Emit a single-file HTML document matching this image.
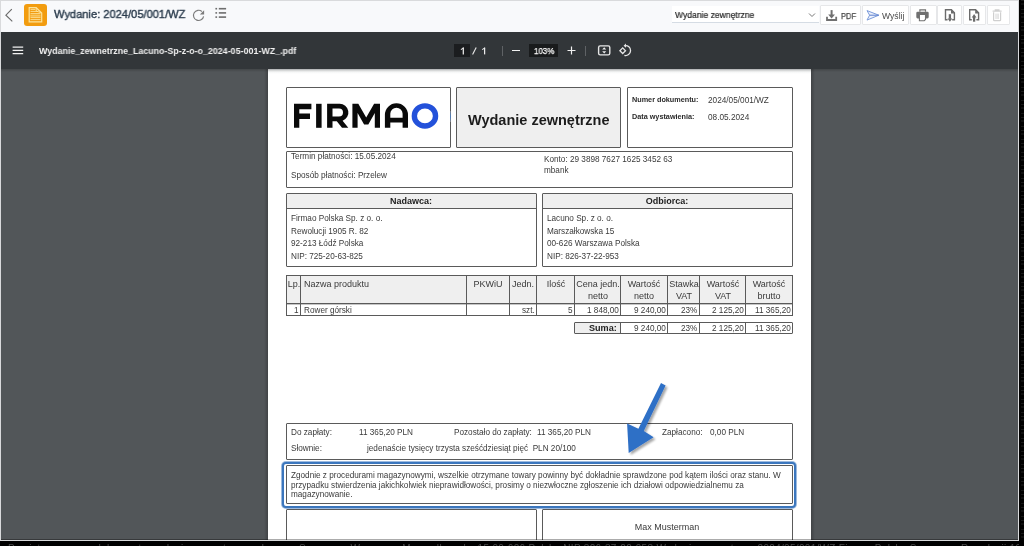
<!DOCTYPE html>
<html><head><meta charset="utf-8">
<style>
*{margin:0;padding:0;box-sizing:border-box}
html,body{width:1024px;height:546px;overflow:hidden;background:#000;font-family:"Liberation Sans",sans-serif;position:relative}
.a{position:absolute}
.t{position:absolute;white-space:nowrap;line-height:1;will-change:transform}
.d{}
</style></head><body>
<div class="a" style="left:0px;top:0px;width:1019px;height:541px;background:#d9dadc"></div>
<div class="a" style="left:1px;top:1px;width:1017px;height:539px;background:#f8f9fb"></div>
<div class="a" style="left:1px;top:32px;width:1017px;height:37px;background:#323639"></div>
<div class="a" style="left:1px;top:69px;width:1017px;height:471px;background:#525659"></div>
<div class="a" style="left:264px;top:69px;width:4px;height:471px;background:linear-gradient(90deg,rgba(0,0,0,0),rgba(0,0,0,.22))"></div>
<div class="a" style="left:811px;top:69px;width:4px;height:471px;background:linear-gradient(90deg,rgba(0,0,0,.22),rgba(0,0,0,0))"></div>
<div class="a" style="left:268px;top:69px;width:543px;height:471px;background:#fff"></div>
<div class="a" style="left:268px;top:69px;width:543px;height:5px;background:linear-gradient(#d5d7d9,#eef0f0 30%,#fff)"></div>
<div class="a" style="left:1px;top:69px;width:1017px;height:3px;background:linear-gradient(rgba(0,0,0,.2),rgba(0,0,0,0))"></div>
<svg class="a" style="left:0;top:0" width="1024" height="546" viewBox="0 0 1024 546"><path d="M11.8 9.1 L5.9 15.2 L12.3 21.4" fill="none" stroke="#6a6a6a" stroke-width="1.15"/></svg>
<div class="a" style="left:24px;top:4px;width:23px;height:22px;background:#f29c0f;border-radius:3px"></div>
<svg class="a" style="left:0;top:0" width="1024" height="546" viewBox="0 0 1024 546"><path d="M29.2 7.7 H36.2 L41.7 13 V21.9 H29.2 Z" fill="none" stroke="#fde39a" stroke-width="1.2"/><path d="M36.2 7.7 V11 L41.7 13" fill="none" stroke="#fde39a" stroke-width="0.9"/><path d="M30.5 9.4 H35.3 M30.5 11.4 H38.2 M30.5 13.6 H40.5 M30.5 17.6 H40.5 M30.5 19.6 H40.5" stroke="#fde39a" stroke-width="0.9"/><rect x="30.3" y="14.6" width="10.3" height="2.2" fill="#f8c35a"/></svg>
<div class="t" style="left:54.30px;top:9.25px;font-size:11.4px;color:#2a3b4c;transform:scaleX(0.975);transform-origin:0 0;-webkit-text-stroke:0.4px #2a3b4c;">Wydanie: 2024/05/001/WZ</div>
<svg class="a" style="left:0;top:0" width="1024" height="546" viewBox="0 0 1024 546"><path d="M203.6 16.3 A5.1 5.1 0 1 1 201.9 11.5" fill="none" stroke="#7b7b7b" stroke-width="1.15"/><path d="M204.1 10.2 V14.6 H199.9 Z" fill="#7b7b7b"/></svg>
<svg class="a" style="left:0;top:0" width="1024" height="546" viewBox="0 0 1024 546"><g fill="#6e6e6e"><rect x="215.4" y="7.9" width="1.7" height="1.6"/><rect x="215.4" y="12.1" width="1.7" height="1.6"/><rect x="215.4" y="16.3" width="1.7" height="1.6"/><rect x="218.8" y="7.9" width="7.3" height="1.6"/><rect x="218.8" y="12.1" width="7.3" height="1.6"/><rect x="218.8" y="16.3" width="7.3" height="1.6"/></g></svg>
<div class="a" style="left:672px;top:6px;width:147px;height:17px;background:#fff;border-bottom:1px solid #d5dce4"></div>
<div class="t" style="left:674.60px;top:11.13px;font-size:9.3px;color:#262626;transform:scaleX(0.92);transform-origin:0 0;-webkit-text-stroke:0.2px #262626;">Wydanie zewnętrzne</div>
<svg class="a" style="left:808px;top:12px" width="8" height="6" viewBox="0 0 8 6"><path d="M1 1.5 L4 4.5 L7 1.5" fill="none" stroke="#777" stroke-width="1"/></svg>
<div class="a" style="left:820px;top:5px;width:41px;height:20px;background:#fff;border:1px solid #e6e7e9;border-radius:1px"></div>
<div class="a" style="left:862px;top:5px;width:47px;height:20px;background:#fff;border:1px solid #e6e7e9;border-radius:1px"></div>
<div class="a" style="left:910px;top:5px;width:27px;height:20px;background:#fff;border:1px solid #e6e7e9;border-radius:1px"></div>
<div class="a" style="left:937px;top:5px;width:25px;height:20px;background:#fff;border:1px solid #e6e7e9;border-radius:1px"></div>
<div class="a" style="left:963px;top:5px;width:23px;height:20px;background:#fff;border:1px solid #e6e7e9;border-radius:1px"></div>
<div class="a" style="left:987px;top:5px;width:23px;height:20px;background:#fff;border:1px solid #e6e7e9;border-radius:1px"></div>
<svg class="a" style="left:0;top:0" width="1024" height="546" viewBox="0 0 1024 546"><path d="M831.6 10.1 V16" stroke="#707070" stroke-width="2"/><path d="M828.2 14.6 H835 L831.6 18.6 Z" fill="#707070"/><path d="M827 16.8 V20 H836.2 V16.8" fill="none" stroke="#707070" stroke-width="1.8"/></svg>
<div class="t" style="left:840.80px;top:11.95px;font-size:8.8px;color:#4a4a4a;transform:scaleX(0.86);transform-origin:0 0;-webkit-text-stroke:0.25px #4a4a4a;">PDF</div>
<svg class="a" style="left:0;top:0" width="1024" height="546" viewBox="0 0 1024 546"><path d="M867 10.6 L878.8 15.2 L867 20.1 L869.6 15.2 Z" fill="#eef2fb" stroke="#7b9bdb" stroke-width="1" stroke-linejoin="round"/><path d="M869.6 15.2 H878.8" stroke="#5b7fcf" stroke-width="1"/></svg>
<div class="t" style="left:882.00px;top:12.12px;font-size:8.6px;color:#4a4a4a;">Wyślij</div>
<svg class="a" style="left:0;top:0" width="1024" height="546" viewBox="0 0 1024 546"><path d="M919.9 11.8 V9.8 H925.5 V11.8" fill="none" stroke="#707070" stroke-width="1.2"/><rect x="916.3" y="11.8" width="12.4" height="6.6" rx="1.3" fill="#707070"/><path d="M919.4 14.4 H925.5 V19.5 L924.2 20.7 H919.4 Z" fill="#fff" stroke="#707070" stroke-width="1.1"/></svg>
<svg class="a" style="left:0;top:0" width="1024" height="546" viewBox="0 0 1024 546"><path d="M947.6 19.7 H945.5 V9.8 H951.4 L954.4 12.8 V19.7 H952.2" fill="none" stroke="#6b6b6b" stroke-width="1.4"/><path d="M951 9.6 L954.8 13.4 H951 Z" fill="#6b6b6b"/><path d="M949.9 14.2 V18.8" stroke="#6b6b6b" stroke-width="2.3"/><path d="M947.5 18.5 H952.3 L949.9 21.7 Z" fill="#6b6b6b"/></svg>
<svg class="a" style="left:0;top:0" width="1024" height="546" viewBox="0 0 1024 546"><path d="M971.8 19.7 H969.7 V9.8 H975.6 L978.6 12.8 V19.7 H976.4" fill="none" stroke="#6b6b6b" stroke-width="1.4"/><path d="M975.2 9.6 L979 13.4 H975.2 Z" fill="#6b6b6b"/><path d="M974.1 21.7 V17" stroke="#6b6b6b" stroke-width="2.3"/><path d="M971.7 17.4 H976.5 L974.1 14.1 Z" fill="#6b6b6b"/></svg>
<svg class="a" style="left:0;top:0" width="1024" height="546" viewBox="0 0 1024 546"><path d="M992.6 11.2 H1001.6 M995.3 11 V9.9 H998.9 V11" fill="none" stroke="#cfcfcf" stroke-width="1.2"/><path d="M993.6 12.3 V19.9 Q993.6 20.7 994.4 20.7 H999.8 Q1000.6 20.7 1000.6 19.9 V12.3" fill="none" stroke="#cfcfcf" stroke-width="1.2"/><path d="M995.9 13.6 V19 M997.1 13.6 V19 M998.3 13.6 V19" stroke="#dadada" stroke-width="0.9"/></svg>
<svg class="a" style="left:12px;top:46px" width="12" height="9" viewBox="0 0 12 9"><path d="M0.6 1 H11.2 M0.6 4.3 H11.2 M0.6 7.6 H11.2" stroke="#f1f1f1" stroke-width="1.25"/></svg>
<div class="t" style="left:39.00px;top:47.38px;font-size:9px;font-weight:700;color:#f1f1f1;transform:scaleX(0.986);transform-origin:0 0;">Wydanie_zewnetrzne_Lacuno-Sp-z-o-o_2024-05-001-WZ_.pdf</div>
<div class="a" style="left:454px;top:44px;width:16px;height:13px;background:#1b1d1f"></div>
<svg class="a" style="left:0;top:0" width="1024" height="546" viewBox="0 0 1024 546"><g stroke="#ececec" fill="none"><path d="M463.3 47.6 V54.4" stroke-width="1.25"/><path d="M463.6 47.9 L460.9 49.6" stroke-width="1.1"/><path d="M472.6 54.4 L476.2 47.6" stroke-width="1.1"/><path d="M484.6 47.6 V54.4" stroke-width="1.25"/><path d="M484.9 47.9 L482.2 49.6" stroke-width="1.1"/></g></svg>
<div class="a" style="left:502px;top:46px;width:1px;height:10px;background:#5f6265"></div>
<div class="a" style="left:512px;top:50px;width:8px;height:1.2000000000000028px;background:#f1f1f1"></div>
<div class="a" style="left:529px;top:44px;width:29px;height:13px;background:#191b1c"></div>
<div class="t" style="left:533.60px;top:46.75px;font-size:8.8px;color:#ffffff;transform:scaleX(0.9);transform-origin:0 0;-webkit-text-stroke:0.25px #fff;">103%</div>
<svg class="a" style="left:567px;top:46px" width="9" height="9" viewBox="0 0 9 9"><path d="M4.5 0.5 V8.5 M0.5 4.5 H8.5" stroke="#f1f1f1" stroke-width="1.2"/></svg>
<div class="a" style="left:585px;top:46px;width:1px;height:10px;background:#5f6265"></div>
<svg class="a" style="left:0;top:0" width="1024" height="546" viewBox="0 0 1024 546"><rect x="598.6" y="45.9" width="11.2" height="9" rx="1.6" fill="none" stroke="#e6e6e6" stroke-width="1.4"/><path d="M604.2 47.2 L606.2 49.6 H602.2 Z M604.2 53.6 L606.2 51.2 H602.2 Z" fill="#f0f0f0"/></svg>
<svg class="a" style="left:0;top:0" width="1024" height="546" viewBox="0 0 1024 546"><path d="M624.8 45.6 A5 5 0 1 1 624.4 55.4" fill="none" stroke="#e6e6e6" stroke-width="1.3"/><path d="M626 43.6 V47.8 L623.6 45.7 Z" fill="#e6e6e6"/><path d="M622.7 47.9 L625.5 50.7 L622.7 53.5 L619.9 50.7 Z" fill="none" stroke="#e6e6e6" stroke-width="1.3"/></svg>
<div class="a" style="left:286px;top:87px;width:165px;height:61px;border:1px solid #5a5a5a;background:transparent;border-radius:1px;"></div>
<div class="a" style="left:456px;top:87px;width:165px;height:61px;border:1px solid #5a5a5a;background:#efefef;border-radius:1px;"></div>
<div class="a" style="left:627px;top:87px;width:166px;height:61px;border:1px solid #5a5a5a;background:transparent;border-radius:1px;"></div>
<svg class="a" style="left:0;top:0" width="1024" height="546" viewBox="0 0 1024 546"><g fill="#0a0a0a"><path d="M294 103.8 H311.4 V109.2 H299.3 V113.6 H310 V118.9 H299.3 V127.8 H294 Z"/><rect x="316.1" y="103.8" width="5.5" height="24"/><path fill-rule="evenodd" d="M327.1 103.8 H339.5 A8.7 8.7 0 0 1 342.6 120.7 L348.3 127.8 H342 L336.8 121.2 H332.5 V127.8 H327.1 Z M332.5 108.6 V116.6 H339 A4 4 0 0 0 339 108.6 Z"/><path d="M352.4 127.8 V103.8 H358.3 L366.2 117.6 L374.1 103.8 H380 V127.8 H374.8 V113 L368.3 124.6 H364.1 L357.6 113 V127.8 Z"/><path fill-rule="evenodd" d="M384.9 127.8 V114.9 A11.55 11.55 0 0 1 408 114.9 V127.8 H402.6 V122.4 H390.3 V127.8 Z M390.3 117.8 H402.6 V113.8 A6.15 6.15 0 0 0 390.3 113.8 Z"/></g><ellipse cx="424.95" cy="115.9" rx="10.6" ry="10.05" fill="none" stroke="#2351da" stroke-width="5.4"/></svg>
<div class="a" style="left:450px;top:111px;width:1px;height:11px;background:linear-gradient(#7a7f88,#4f7bb3 45%,#4f7bb3 60%,#8a8585)"></div>
<div class="t" style="left:468.20px;top:113.03px;font-size:14.5px;font-weight:700;color:#1c1c1c;">Wydanie zewnętrzne</div>
<div class="t" style="left:632.00px;top:95.86px;font-size:7.25px;font-weight:700;color:#2a2a2a;">Numer dokumentu:</div>
<div class="t d" style="left:708.30px;top:97.02px;font-size:8.24px;color:#3a3a3a;">2024/05/001/WZ</div>
<div class="t" style="left:632.00px;top:112.66px;font-size:7.25px;font-weight:700;color:#2a2a2a;">Data wystawienia:</div>
<div class="t d" style="left:708.30px;top:113.62px;font-size:8.24px;color:#3a3a3a;">08.05.2024</div>
<div class="a" style="left:286px;top:151px;width:507px;height:37px;border:1px solid #5a5a5a;background:transparent;border-radius:1px;"></div>
<div class="t d" style="left:291.00px;top:153.26px;font-size:8.2px;color:#3a3a3a;">Termin płatności: 15.05.2024</div>
<div class="t d" style="left:291.00px;top:171.96px;font-size:8.2px;color:#3a3a3a;">Sposób płatności: Przelew</div>
<div class="t d" style="left:544.20px;top:156.06px;font-size:8.2px;color:#3a3a3a;">Konto: 29 3898 7627 1625 3452 63</div>
<div class="t d" style="left:544.20px;top:167.26px;font-size:8.2px;color:#3a3a3a;">mbank</div>
<div class="a" style="left:286px;top:193px;width:251px;height:74px;border:1px solid #5a5a5a;background:transparent;border-radius:1px;"></div>
<div class="a" style="left:287px;top:194px;width:249px;height:15px;background:#efefef;border-bottom:1px solid #5a5a5a"></div>
<div class="t" style="left:211.10px;width:400px;text-align:center;top:196.98px;font-size:9px;font-weight:700;color:#222;">Nadawca:</div>
<div class="t d" style="left:291.00px;top:214.86px;font-size:8.2px;color:#3a3a3a;">Firmao Polska Sp. z o. o.</div>
<div class="t d" style="left:291.00px;top:227.61px;font-size:8.2px;color:#3a3a3a;">Rewolucji 1905 R. 82</div>
<div class="t d" style="left:291.00px;top:240.36px;font-size:8.2px;color:#3a3a3a;">92-213 Łódź Polska</div>
<div class="t d" style="left:291.00px;top:253.11px;font-size:8.2px;color:#3a3a3a;">NIP: 725-20-63-825</div>
<div class="a" style="left:542px;top:193px;width:251px;height:74px;border:1px solid #5a5a5a;background:transparent;border-radius:1px;"></div>
<div class="a" style="left:543px;top:194px;width:249px;height:15px;background:#efefef;border-bottom:1px solid #5a5a5a"></div>
<div class="t" style="left:467.10px;width:400px;text-align:center;top:196.98px;font-size:9px;font-weight:700;color:#222;">Odbiorca:</div>
<div class="t d" style="left:547.00px;top:214.86px;font-size:8.2px;color:#3a3a3a;">Lacuno Sp. z o. o.</div>
<div class="t d" style="left:547.00px;top:227.61px;font-size:8.2px;color:#3a3a3a;">Marszałkowska 15</div>
<div class="t d" style="left:547.00px;top:240.36px;font-size:8.2px;color:#3a3a3a;">00-626 Warszawa Polska</div>
<div class="t d" style="left:547.00px;top:253.11px;font-size:8.2px;color:#3a3a3a;">NIP: 826-37-22-953</div>
<div class="a" style="left:286px;top:275px;width:507px;height:29px;background:#efefef"></div>
<div class="a" style="left:286px;top:275px;width:507px;height:1px;background:#5a5a5a"></div>
<div class="a" style="left:286px;top:303px;width:507px;height:1px;background:#5a5a5a"></div>
<div class="a" style="left:286px;top:304px;width:507px;height:1px;background:rgba(90,90,90,.35)"></div>
<div class="a" style="left:286px;top:315px;width:507px;height:1px;background:#5a5a5a"></div>
<div class="a" style="left:286px;top:275px;width:1px;height:41px;background:#5a5a5a"></div>
<div class="a" style="left:300px;top:275px;width:1px;height:41px;background:#5a5a5a"></div>
<div class="a" style="left:466px;top:275px;width:1px;height:41px;background:#5a5a5a"></div>
<div class="a" style="left:509px;top:275px;width:1px;height:41px;background:#5a5a5a"></div>
<div class="a" style="left:536px;top:275px;width:1px;height:41px;background:#5a5a5a"></div>
<div class="a" style="left:574px;top:275px;width:1px;height:41px;background:#5a5a5a"></div>
<div class="a" style="left:620px;top:275px;width:1px;height:41px;background:#5a5a5a"></div>
<div class="a" style="left:667px;top:275px;width:1px;height:41px;background:#5a5a5a"></div>
<div class="a" style="left:699px;top:275px;width:1px;height:41px;background:#5a5a5a"></div>
<div class="a" style="left:745px;top:275px;width:1px;height:41px;background:#5a5a5a"></div>
<div class="a" style="left:792px;top:275px;width:1px;height:41px;background:#5a5a5a"></div>
<div class="t d" style="left:93.50px;width:400px;text-align:center;top:280.28px;font-size:9.0px;color:#3a3a3a;">Lp.</div>
<div class="t d" style="left:304.00px;top:280.28px;font-size:9.0px;color:#3a3a3a;">Nazwa produktu</div>
<div class="t d" style="left:288.00px;width:400px;text-align:center;top:280.28px;font-size:9.0px;color:#3a3a3a;">PKWiU</div>
<div class="t d" style="left:323.00px;width:400px;text-align:center;top:280.28px;font-size:9.0px;color:#3a3a3a;">Jedn.</div>
<div class="t d" style="left:355.50px;width:400px;text-align:center;top:280.28px;font-size:9.0px;color:#3a3a3a;">Ilość</div>
<div class="t d" style="left:397.50px;width:400px;text-align:center;top:280.28px;font-size:9.0px;color:#3a3a3a;">Cena jedn.</div>
<div class="t d" style="left:397.50px;width:400px;text-align:center;top:292.18px;font-size:9.0px;color:#3a3a3a;">netto</div>
<div class="t d" style="left:444.00px;width:400px;text-align:center;top:280.28px;font-size:9.0px;color:#3a3a3a;">Wartość</div>
<div class="t d" style="left:444.00px;width:400px;text-align:center;top:292.18px;font-size:9.0px;color:#3a3a3a;">netto</div>
<div class="t d" style="left:483.50px;width:400px;text-align:center;top:280.28px;font-size:9.0px;color:#3a3a3a;">Stawka</div>
<div class="t d" style="left:483.50px;width:400px;text-align:center;top:292.18px;font-size:9.0px;color:#3a3a3a;">VAT</div>
<div class="t d" style="left:522.50px;width:400px;text-align:center;top:280.28px;font-size:9.0px;color:#3a3a3a;">Wartość</div>
<div class="t d" style="left:522.50px;width:400px;text-align:center;top:292.18px;font-size:9.0px;color:#3a3a3a;">VAT</div>
<div class="t d" style="left:569.00px;width:400px;text-align:center;top:280.28px;font-size:9.0px;color:#3a3a3a;">Wartość</div>
<div class="t d" style="left:569.00px;width:400px;text-align:center;top:292.18px;font-size:9.0px;color:#3a3a3a;">brutto</div>
<div class="t d" style="right:725.50px;top:307.26px;font-size:8.2px;color:#3a3a3a;">1</div>
<div class="t d" style="left:304.00px;top:307.26px;font-size:8.2px;color:#3a3a3a;">Rower górski</div>
<div class="t d" style="right:489.50px;top:307.26px;font-size:8.2px;color:#3a3a3a;">szt.</div>
<div class="t d" style="right:451.50px;top:307.26px;font-size:8.2px;color:#3a3a3a;">5</div>
<div class="t d" style="right:405.50px;top:307.26px;font-size:8.2px;color:#3a3a3a;">1 848,00</div>
<div class="t d" style="right:358.50px;top:307.26px;font-size:8.2px;color:#3a3a3a;">9 240,00</div>
<div class="t d" style="right:326.50px;top:307.26px;font-size:8.2px;color:#3a3a3a;">23%</div>
<div class="t d" style="right:280.50px;top:307.26px;font-size:8.2px;color:#3a3a3a;">2 125,20</div>
<div class="t d" style="right:233.50px;top:307.26px;font-size:8.2px;color:#3a3a3a;">11 365,20</div>
<div class="a" style="left:574px;top:322px;width:219px;height:12px;border:1px solid #5a5a5a;background:transparent;border-radius:1px;"></div>
<div class="a" style="left:575px;top:323px;width:45px;height:10px;background:#efefef"></div>
<div class="a" style="left:620px;top:322px;width:1px;height:12px;background:#5a5a5a"></div>
<div class="a" style="left:667px;top:322px;width:1px;height:12px;background:#5a5a5a"></div>
<div class="a" style="left:699px;top:322px;width:1px;height:12px;background:#5a5a5a"></div>
<div class="a" style="left:745px;top:322px;width:1px;height:12px;background:#5a5a5a"></div>
<div class="t" style="right:407.50px;top:324.30px;font-size:9.1px;font-weight:700;color:#222;">Suma:</div>
<div class="t d" style="right:358.50px;top:325.06px;font-size:8.2px;color:#3a3a3a;">9 240,00</div>
<div class="t d" style="right:326.50px;top:325.06px;font-size:8.2px;color:#3a3a3a;">23%</div>
<div class="t d" style="right:280.50px;top:325.06px;font-size:8.2px;color:#3a3a3a;">2 125,20</div>
<div class="t d" style="right:233.50px;top:325.06px;font-size:8.2px;color:#3a3a3a;">11 365,20</div>
<div class="a" style="left:286px;top:423px;width:507px;height:37px;border:1px solid #5a5a5a;background:transparent;border-radius:1px;"></div>
<div class="t d" style="left:290.60px;top:428.86px;font-size:8.2px;color:#3a3a3a;">Do zapłaty:</div>
<div class="t d" style="left:358.60px;top:428.86px;font-size:8.2px;color:#3a3a3a;">11 365,20 PLN</div>
<div class="t d" style="left:453.60px;top:428.86px;font-size:8.2px;color:#3a3a3a;">Pozostało do zapłaty:</div>
<div class="t d" style="left:537.30px;top:428.86px;font-size:8.2px;color:#3a3a3a;">11 365,20 PLN</div>
<div class="t d" style="left:661.90px;top:428.86px;font-size:8.2px;color:#3a3a3a;">Zapłacono:</div>
<div class="t d" style="left:710.20px;top:428.86px;font-size:8.2px;color:#3a3a3a;">0,00 PLN</div>
<div class="t d" style="left:290.60px;top:445.16px;font-size:8.2px;color:#3a3a3a;">Słownie:</div>
<div class="t d" style="left:367.00px;top:445.16px;font-size:8.2px;color:#3a3a3a;">jedenaście tysięcy trzysta sześćdziesiąt pięć&nbsp; PLN 20/100</div>
<div class="a" style="left:286px;top:509px;width:251px;height:71px;border:1px solid #5a5a5a;background:transparent;border-radius:1px;"></div>
<div class="a" style="left:542px;top:509px;width:251px;height:71px;border:1px solid #5a5a5a;background:transparent;border-radius:1px;"></div>
<div class="t d" style="left:467.00px;width:400px;text-align:center;top:523.40px;font-size:8.98px;color:#3a3a3a;">Max Musterman</div>
<div class="a" style="left:282px;top:462px;width:514px;height:46px;border:2px solid #3b76bd;background:#fff;border-radius:4px;box-shadow:0 0 0 1px rgba(59,118,189,.5)"></div>
<div class="a" style="left:286px;top:465px;width:507px;height:39px;border:1px solid #5a5a5a;background:transparent;border-radius:1px;"></div>
<div class="t d" style="left:291.00px;top:471.86px;font-size:8.2px;color:#3a3a3a;">Zgodnie z procedurami magazynowymi, wszelkie otrzymane towary powinny być dokładnie sprawdzone pod kątem ilości oraz stanu. W</div>
<div class="t d" style="left:291.00px;top:482.06px;font-size:8.2px;color:#3a3a3a;">przypadku stwierdzenia jakichkolwiek nieprawidłowości, prosimy o niezwłoczne zgłoszenie ich działowi odpowiedzialnemu za</div>
<div class="t d" style="left:291.00px;top:491.36px;font-size:8.2px;color:#3a3a3a;">magazynowanie.</div>
<svg class="a" style="left:600px;top:370px" width="90" height="100" viewBox="600 370 90 100"><defs><filter id="sh" x="-20%" y="-20%" width="150%" height="150%"><feGaussianBlur in="SourceAlpha" stdDeviation="1.2"/><feOffset dx="1.5" dy="1.5"/><feComponentTransfer><feFuncA type="linear" slope="0.35"/></feComponentTransfer><feMerge><feMergeNode/><feMergeNode in="SourceGraphic"/></feMerge></filter></defs><path d="M661 383.1 L665.6 385.6 L643.8 431 L653.6 437.3 L628.7 452.9 L627.1 423.6 L638.4 428.7 Z" fill="#2f6fc6" filter="url(#sh)"/></svg>
<div class="a" style="left:0px;top:540px;width:1019px;height:1px;background:#d9dadc"></div>
<div class="a" style="left:1018px;top:0px;width:1px;height:541px;background:#d9dadc"></div>
<div class="a" style="left:0px;top:541px;width:1024px;height:5px;background:#000"></div>
<div class="a" style="left:1019px;top:0px;width:5px;height:546px;background:#000"></div>
<div class="a" style="left:1px;top:539px;width:1017px;height:1px;background:rgba(0,0,0,.33)"></div>
<div class="a" style="left:0;top:543px;width:1019px;height:3px;overflow:hidden"><div class="t" style="left:8px;top:0.2px;font-size:10px;line-height:14px;color:#4a4a4a;letter-spacing:0.3px;transform:translateY(-1.4px)">Przyjęto magazyn dokumentu wydania zewnętrznego Lacuno Sp. z o. o. Warszawa Marszałkowska 15 00-626 Polska NIP 826-37-22-953 Wydanie zewnętrzne 2024/05/001/WZ Firmao Polska Sp. z o. o. Rewolucji 1905 R. 82 Łódź</div></div>
<div class="a" style="left:1021px;top:0;width:3px;height:541px;overflow:hidden"><div style="position:absolute;left:-1px;top:0;width:6px;height:541px;background:repeating-linear-gradient(180deg,rgba(150,150,150,.16) 0 1px,rgba(0,0,0,0) 1px 3px,rgba(150,150,150,.1) 3px 5px,rgba(0,0,0,0) 5px 9px,rgba(150,150,150,.14) 9px 10px,rgba(0,0,0,0) 10px 13px)"></div></div>
</body></html>
